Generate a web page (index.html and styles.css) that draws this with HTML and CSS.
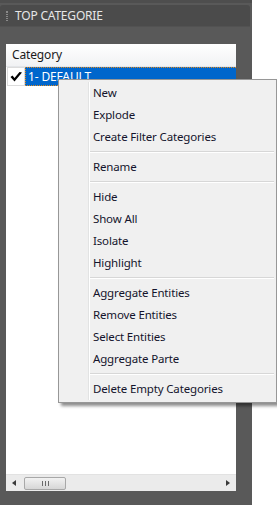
FILE: index.html
```html
<!DOCTYPE html>
<html lang="en">
<head>
    <meta charset="UTF-8">
    <title>Top Categorie</title>
    <link rel="stylesheet" href="styles.css">
</head>
<body>

    <div class="panel">
        <div class="title-bar">
            <span class="grip"></span>
            <span class="title">TOP CATEGORIE</span>
        </div>

        <div class="list">
            <div class="list-header">Category</div>
            <div class="list-row">
                <span class="check">
                    <svg width="13" height="12" viewBox="0 0 13 12">
                        <path d="M0.5 6 L4.5 10.5 L12 1.5 L9.5 1 L4.5 7 L2.5 4.5 Z" fill="#000"/>
                    </svg>
                </span>
                <span class="row-label">1- DEFAULT</span>
            </div>
            <div class="list-body"></div>
            <div class="hscroll">
                <span class="arrow arrow-left"></span>
                <span class="thumb"><span class="thumb-grip"></span></span>
                <span class="track"></span>
                <span class="arrow arrow-right"></span>
            </div>
        </div>
    </div>

    <ul class="menu">
        <li>New</li>
        <li>Explode</li>
        <li>Create Filter Categories</li>
        <li class="sep"></li>
        <li>Rename</li>
        <li class="sep"></li>
        <li>Hide</li>
        <li>Show All</li>
        <li>Isolate</li>
        <li>Highlight</li>
        <li class="sep"></li>
        <li>Aggregate Entities</li>
        <li>Remove Entities</li>
        <li>Select Entities</li>
        <li>Aggregate Parte</li>
        <li class="sep"></li>
        <li>Delete Empty Categories</li>
    </ul>

</body>
</html>
```

FILE: styles.css
```css
body {
    margin: 0;
    background-color: #ffffff;
    font-family: 'Noto Sans', 'Open Sans', sans-serif;
    font-size: 11.5px;
    letter-spacing: -0.15px;
    position: relative;
    width: 277px;
    height: 505px;
    overflow: hidden;
}

.panel {
    width: 252px;
    height: 505px;
    background-color: #595959;
    border-top: 3px solid #4e4e4e;
    box-sizing: border-box;
    display: flex;
    flex-direction: column;
}

.title-bar {
    margin-top: 2px;
    margin-right: 2px;
    height: 21px;
    background-color: #4b4b4b;
    border-radius: 3px 3px 0 0;
    border-bottom: 1px solid #525252;
    display: flex;
    align-items: center;
}

.grip {
    width: 2px;
    height: 10px;
    margin-left: 6px;
    margin-right: 7px;
    border-left: 1px dotted #8a8a8a;
    border-right: 1px dotted #8a8a8a;
    box-sizing: border-box;
}

.title {
    color: #e6e6e6;
    font-size: 12px;
    letter-spacing: -0.2px;
}

.list {
    margin-top: 17px;
    margin-left: 6px;
    width: 230px;
    height: 447px;
    background-color: #ffffff;
    display: flex;
    flex-direction: column;
}

.list-header {
    height: 22px;
    line-height: 22px;
    padding-left: 6px;
    font-size: 12px;
    color: #1a1a1a;
    background: linear-gradient(#ffffff, #f1f2f4);
    border-bottom: 1px solid #e3e5e8;
}

.list-row {
    height: 19px;
    display: flex;
    align-items: stretch;
}

.check {
    width: 18px;
    display: flex;
    align-items: center;
    justify-content: center;
    border: 1px solid #dcdcdc;
    box-sizing: border-box;
    margin-left: 1px;
}

.row-label {
    flex: 1;
    background-color: #0066cc;
    color: #ffffff;
    padding-left: 2px;
    font-size: 12px;
    line-height: 17px;
    border: 1px dotted #e08a20;
    border-right: none;
}

.list-body {
    flex: 1;
}

.hscroll {
    height: 16px;
    background-color: #ebebeb;
    border-top: 1px solid #e2e2e2;
    display: flex;
    align-items: center;
}

.arrow {
    width: 0;
    height: 0;
    border-top: 3px solid transparent;
    border-bottom: 3px solid transparent;
}

.arrow-left {
    margin-left: 6px;
    margin-right: 8px;
    border-right: 4px solid #3a3a3a;
}

.arrow-right {
    margin-left: 8px;
    margin-right: 6px;
    border-left: 4px solid #3a3a3a;
}

.thumb {
    width: 42px;
    height: 13px;
    background: linear-gradient(#f2f2f2, #d6d6d6);
    border: 1px solid #a8a8a8;
    border-radius: 2px;
    box-sizing: border-box;
    display: flex;
    align-items: center;
    justify-content: center;
}

.thumb-grip {
    width: 7px;
    height: 5px;
    background: repeating-linear-gradient(90deg, #6a6a6a 0 1px, transparent 1px 3px);
}

.track {
    flex: 1;
}

.menu {
    position: absolute;
    left: 58px;
    top: 79px;
    width: 219px;
    margin: 0;
    padding: 2px;
    list-style: none;
    box-sizing: border-box;
    background-color: #f0f0f0;
    border: 1px solid #979797;
    box-shadow: 3px 3px 3px rgba(0, 0, 0, 0.45);
    color: #14142c;
}

.menu::before {
    content: "";
    position: absolute;
    left: 29px;
    top: 2px;
    bottom: 2px;
    width: 1px;
    background-color: #e2e3e3;
    border-right: 1px solid #ffffff;
}

.menu li {
    height: 22px;
    line-height: 22px;
    padding-left: 32px;
}

.menu li.sep {
    height: 8px;
    padding: 0;
    margin-left: 29px;
    position: relative;
}

.menu li.sep::after {
    content: "";
    position: absolute;
    left: 0;
    right: 0;
    top: 3px;
    height: 1px;
    background-color: #d7d7d7;
    border-bottom: 1px solid #ffffff;
}
```
